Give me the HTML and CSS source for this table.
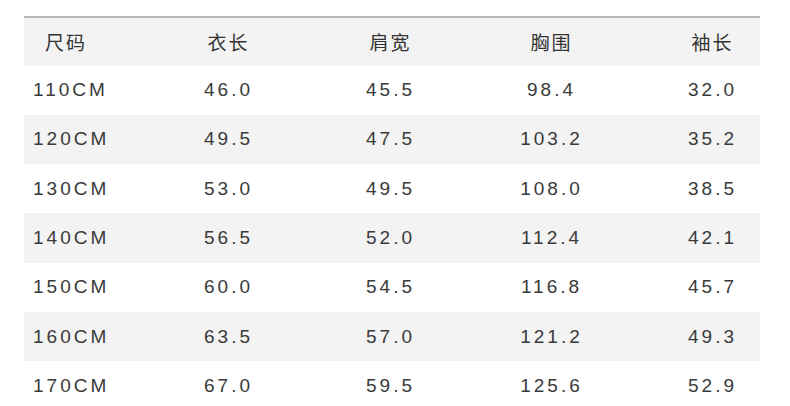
FILE: index.html
```html
<!DOCTYPE html>
<html lang="zh">
<head>
<meta charset="utf-8">
<link rel="stylesheet" href="styles.css">
</head>
<body>
<div class="table">
  <div class="row head">
    <div class="cell first">尺码</div><div class="cell">衣长</div><div class="cell">肩宽</div><div class="cell">胸围</div><div class="cell">袖长</div>
  </div>
  <div class="row"><div class="cell first">110CM</div><div class="cell">46.0</div><div class="cell">45.5</div><div class="cell">98.4</div><div class="cell">32.0</div></div>
  <div class="row alt"><div class="cell first">120CM</div><div class="cell">49.5</div><div class="cell">47.5</div><div class="cell">103.2</div><div class="cell">35.2</div></div>
  <div class="row"><div class="cell first">130CM</div><div class="cell">53.0</div><div class="cell">49.5</div><div class="cell">108.0</div><div class="cell">38.5</div></div>
  <div class="row alt"><div class="cell first">140CM</div><div class="cell">56.5</div><div class="cell">52.0</div><div class="cell">112.4</div><div class="cell">42.1</div></div>
  <div class="row"><div class="cell first">150CM</div><div class="cell">60.0</div><div class="cell">54.5</div><div class="cell">116.8</div><div class="cell">45.7</div></div>
  <div class="row alt"><div class="cell first">160CM</div><div class="cell">63.5</div><div class="cell">57.0</div><div class="cell">121.2</div><div class="cell">49.3</div></div>
  <div class="row"><div class="cell first">170CM</div><div class="cell">67.0</div><div class="cell">59.5</div><div class="cell">125.6</div><div class="cell">52.9</div></div>
</div>
</body>
</html>
```
FILE: styles.css
```css
html, body {
  margin: 0;
  padding: 0;
  background: #ffffff;
  overflow: hidden;
}
body {
  padding-top: 16px;
  font-family: "Liberation Sans", Arial, "Noto Sans CJK SC", sans-serif;
  color: #3a3a3a;
}
.table {
  margin-left: 24px;
  width: 736px;
  border-top: 2px solid #b8b8b8;
}
.row {
  display: grid;
  grid-template-columns: 84px 238px 86px 236px 86px;
  height: 49.3px;
  align-items: center;
  font-size: 19px;
  letter-spacing: 3px;
}
.row.head {
  height: 47.5px;
  background: #f3f3f3;
  font-family: "Noto Sans CJK SC", sans-serif;
  font-size: 19px;
  letter-spacing: 2px;
  color: #333333;
}
.row.alt {
  background: #f3f3f3;
}
.cell {
  text-align: center;
  white-space: nowrap;
  padding-left: 3px;
}
.cell.first {
  text-align: left;
  padding-left: 9px;
}
.head .cell.first {
  padding-left: 21px;
}
```
